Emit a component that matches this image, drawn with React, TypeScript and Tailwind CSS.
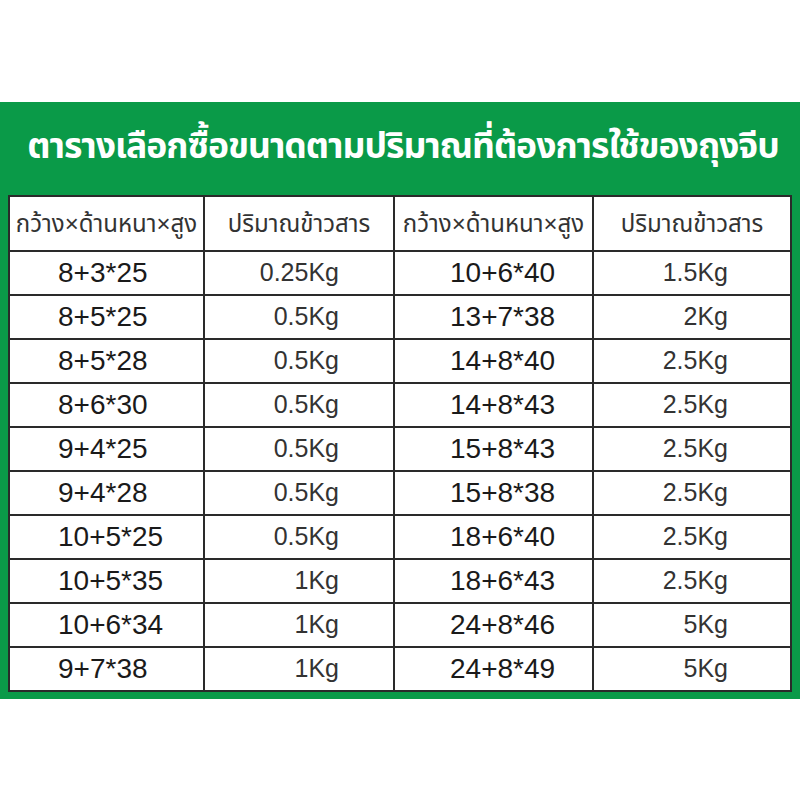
import React from "react";

const rows: [string, string, string, string][] = [
  ["8+3*25", "0.25Kg", "10+6*40", "1.5Kg"],
  ["8+5*25", "0.5Kg", "13+7*38", "2Kg"],
  ["8+5*28", "0.5Kg", "14+8*40", "2.5Kg"],
  ["8+6*30", "0.5Kg", "14+8*43", "2.5Kg"],
  ["9+4*25", "0.5Kg", "15+8*43", "2.5Kg"],
  ["9+4*28", "0.5Kg", "15+8*38", "2.5Kg"],
  ["10+5*25", "0.5Kg", "18+6*40", "2.5Kg"],
  ["10+5*35", "1Kg", "18+6*43", "2.5Kg"],
  ["10+6*34", "1Kg", "24+8*46", "5Kg"],
  ["9+7*38", "1Kg", "24+8*49", "5Kg"],
];

const font = { fontFamily: '"Liberation Sans", "Noto Sans Thai", sans-serif' };

export default function App() {
  return (
    <div className="w-[800px] h-[800px] bg-white flex flex-col" style={font}>
      <div className="h-[102px]" />
      <div className="bg-[#0a9a48] h-[597px] flex flex-col px-[8px] pb-[7px]">
        <div className="h-[93px] flex items-center justify-center text-white font-bold text-[35.5px] tracking-[-1px] whitespace-nowrap leading-none pb-[4px] pl-[6px]">
          ตารางเลือกซื้อขนาดตามปริมาณที่ต้องการใช้ของถุงจีบ
        </div>
        <div className="bg-white border-t-2 border-l-2 border-[#2a2a2a] grid grid-cols-[195px_190px_199px_1fr]">
          {["กว้าง×ด้านหนา×สูง", "ปริมาณข้าวสาร", "กว้าง×ด้านหนา×สูง", "ปริมาณข้าวสาร"].map((h, i) => (
            <div
              key={i}
              className="h-[55px] border-r-2 border-b-2 border-[#2a2a2a] flex items-center justify-center text-[24px] text-[#333] whitespace-nowrap"
            >
              {h}
            </div>
          ))}
          {rows.map((r, ri) => (
            <React.Fragment key={ri}>
              <div className="h-[44px] border-r-2 border-b-2 border-[#2a2a2a] flex items-center pl-[48px] text-[28px] text-[#1a1a1a]">
                {r[0]}
              </div>
              <div className="h-[44px] border-r-2 border-b-2 border-[#2a2a2a] flex items-center justify-end pr-[54px] text-[25px] text-[#333]">
                {r[1]}
              </div>
              <div className="h-[44px] border-r-2 border-b-2 border-[#2a2a2a] flex items-center pl-[55px] text-[28px] text-[#1a1a1a]">
                {r[2]}
              </div>
              <div className="h-[44px] border-r-2 border-b-2 border-[#2a2a2a] flex items-center justify-end pr-[62px] text-[25px] text-[#333]">
                {r[3]}
              </div>
            </React.Fragment>
          ))}
        </div>
      </div>
    </div>
  );
}
